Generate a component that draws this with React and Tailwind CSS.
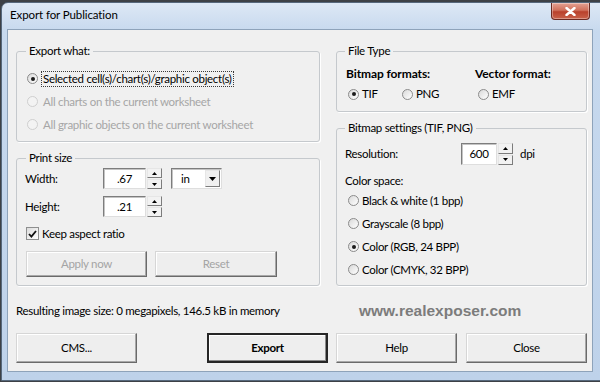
import React from 'react';

function Radio({ checked, disabled }) {
  return (
    <span
      className={`w-[11px] h-[11px] shrink-0 rounded-full border flex items-center justify-center ${
        disabled
          ? 'border-[#cfcfcf] bg-[#f3f3f3]'
          : 'border-[#8b8b8b] bg-[linear-gradient(135deg,#d9d9d9,#ffffff)]'
      }`}
    >
      {checked && <span className="w-[4px] h-[4px] rounded-full bg-[#1b1b1b]" />}
    </span>
  );
}

function Spinner({ h }) {
  return (
    <div className={`ml-[1px] w-[15px] flex flex-col gap-[1px] ${h}`}>
      <div className="flex-1 flex items-center justify-center bg-[#f2f2f2] border border-t-[#e6e6e6] border-l-[#e6e6e6] border-r-[#7c7c7c] border-b-[#7c7c7c]">
        <svg width="5" height="3" viewBox="0 0 5 3"><path d="M2.5 0L5 3H0z" fill="#000" /></svg>
      </div>
      <div className="flex-1 flex items-center justify-center bg-[#f2f2f2] border border-t-[#e6e6e6] border-l-[#e6e6e6] border-r-[#7c7c7c] border-b-[#7c7c7c]">
        <svg width="5" height="3" viewBox="0 0 5 3"><path d="M0 0h5L2.5 3z" fill="#000" /></svg>
      </div>
    </div>
  );
}

function TextBox({ value, w, h }) {
  return (
    <div className={`${w} ${h} bg-white flex items-center justify-center border border-t-[#7d7d7d] border-l-[#7d7d7d] border-r-[#dedede] border-b-[#dedede] shadow-[inset_1px_1px_0_#c4c4c4]`}>
      {value}
    </div>
  );
}

function Button({ children, w, disabled, isDefault }) {
  return (
    <button
      className={`${w} h-full flex items-center justify-center bg-[#eeeeee] ${
        isDefault
          ? 'border-2 border-[#262626] font-bold shadow-[inset_-1px_-1px_0_#8a8a8a,inset_1px_1px_0_#ffffff]'
          : 'border border-t-[#d6d6d6] border-l-[#d6d6d6] border-r-[#6a6a6a] border-b-[#6a6a6a] shadow-[inset_-1px_-1px_0_#a8a8a8,inset_1px_1px_0_#ffffff]'
      } ${disabled ? 'text-[#a4a4a4]' : 'text-black'}`}
    >
      {children}
    </button>
  );
}

export default function App() {
  return (
    <div className="w-[600px] h-[382px] overflow-hidden bg-[#3d4146] font-['Lato',sans-serif] text-[11.5px] tracking-[-0.3px] leading-[14px] text-black">
      <div className="ml-[1px] mt-[2px] w-[606px] h-[379px] flex flex-col rounded-t-[7px] border border-[#56687c] bg-[linear-gradient(180deg,#dde8f5_0px,#c7d9ee_28px,#bed2ea_100%)]">
        {/* title bar */}
        <div className="h-[26px] shrink-0 flex items-start justify-between">
          <span className="ml-[8px] mt-[5px] text-[11.5px] tracking-[-0.1px] text-black">Export for Publication</span>
          <div className="mr-[16px] w-[39px] h-[17px] flex items-center justify-center rounded-b-[4px] border border-t-0 border-[#6b2a22] bg-[linear-gradient(180deg,#e4a293_0%,#d0705b_45%,#b9412c_55%,#c9624a_100%)] shadow-[inset_0_0_0_1px_rgba(255,255,255,0.35)]">
            <svg width="11" height="9" viewBox="0 0 11 9">
              <path d="M1.5 1l8 7M9.5 1l-8 7" stroke="#fff" strokeWidth="2.4" strokeLinecap="round" />
            </svg>
          </div>
        </div>

        {/* client area */}
        <div className="ml-[5px] w-[586px] h-[343px] shrink-0 flex flex-col border border-[#8ea3ba] bg-[#f0f0f0] pl-[8px] pr-[5px] pt-[14px]">
          <div className="flex gap-[16px]">
            {/* left column */}
            <div className="w-[304px] flex flex-col">
              <fieldset className="h-[98px] border border-[#c5c9cd] rounded-[3px] shadow-[1px_1px_0_#ffffff]">
                <legend className="ml-[9px] px-[3px]">Export what:</legend>
                <div className="pt-[9px] pl-[10px] flex flex-col">
                  <div className="h-[23px] flex items-center">
                    <Radio checked />
                    <span className="ml-[3px] px-[1px] border border-dotted border-[#3a3a3a]">Selected cell(s)/chart(s)/graphic object(s)</span>
                  </div>
                  <div className="h-[23px] flex items-center">
                    <Radio disabled />
                    <span className="ml-[5px] text-[#a6a6a6]">All charts on the current worksheet</span>
                  </div>
                  <div className="h-[23px] flex items-center">
                    <Radio disabled />
                    <span className="ml-[5px] text-[#a6a6a6]">All graphic objects on the current worksheet</span>
                  </div>
                </div>
              </fieldset>

              <fieldset className="mt-[9px] h-[135px] border border-[#c5c9cd] rounded-[3px] shadow-[1px_1px_0_#ffffff]">
                <legend className="ml-[9px] px-[3px]">Print size</legend>
                <div className="pt-[3px] pl-[8px] flex flex-col">
                  <div className="h-[21px] flex items-center">
                    <span className="w-[78px]">Width:</span>
                    <TextBox value=".67" w="w-[43px]" h="h-[21px]" />
                    <Spinner h="h-[21px]" />
                    <div className="ml-[9px] w-[51px] h-[21px] flex items-center bg-white border border-t-[#7d7d7d] border-l-[#7d7d7d] border-r-[#dedede] border-b-[#dedede] shadow-[inset_1px_1px_0_#c4c4c4]">
                      <span className="flex-1 pl-[9px]">in</span>
                      <div className="w-[15px] h-[17px] mr-[1px] flex items-center justify-center bg-[#f0f0f0] border border-t-[#e6e6e6] border-l-[#e6e6e6] border-r-[#7c7c7c] border-b-[#7c7c7c]">
                        <svg width="7" height="4" viewBox="0 0 7 4"><path d="M0 0h7L3.5 4z" fill="#000" /></svg>
                      </div>
                    </div>
                  </div>
                  <div className="mt-[7px] h-[21px] flex items-center">
                    <span className="w-[78px]">Height:</span>
                    <TextBox value=".21" w="w-[43px]" h="h-[21px]" />
                    <Spinner h="h-[21px]" />
                  </div>
                  <div className="mt-[9px] h-[15px] flex items-center">
                    <span className="ml-[1px] w-[13px] h-[13px] flex items-center justify-center border border-[#8e8f8f] bg-[linear-gradient(135deg,#dcdcdc,#ffffff)]">
                      <svg width="9" height="8" viewBox="0 0 9 8">
                        <path d="M1 4l2.4 2.6L8 1" stroke="#111" strokeWidth="1.8" fill="none" />
                      </svg>
                    </span>
                    <span className="ml-[3px]">Keep aspect ratio</span>
                  </div>
                  <div className="mt-[10px] h-[26px] flex">
                    <div className="ml-[1px] h-full">
                      <Button w="w-[121px]" disabled>Apply now</Button>
                    </div>
                    <div className="ml-[8px] h-full">
                      <Button w="w-[122px]" disabled>Reset</Button>
                    </div>
                  </div>
                </div>
              </fieldset>
            </div>

            {/* right column */}
            <div className="w-[251px] flex flex-col">
              <fieldset className="h-[68px] border border-[#c5c9cd] rounded-[3px] shadow-[1px_1px_0_#ffffff]">
                <legend className="ml-[8px] px-[3px]">File Type</legend>
                <div className="pt-[9px] pl-[9px] flex">
                  <div className="w-[129px] flex flex-col">
                    <span className="font-bold text-[12px] tracking-[-0.1px]">Bitmap formats:</span>
                    <div className="mt-[6px] h-[14px] flex items-center">
                      <div className="w-[56px] flex items-center">
                        <span className="ml-[2px]"><Radio checked /></span>
                        <span className="ml-[3px]">TIF</span>
                      </div>
                      <Radio />
                      <span className="ml-[3px]">PNG</span>
                    </div>
                  </div>
                  <div className="flex flex-col">
                    <span className="font-bold text-[12px] tracking-[-0.1px]">Vector format:</span>
                    <div className="mt-[6px] h-[14px] flex items-center">
                      <span className="ml-[3px]"><Radio /></span>
                      <span className="ml-[3px]">EMF</span>
                    </div>
                  </div>
                </div>
              </fieldset>

              <fieldset className="mt-[9px] h-[165px] border border-[#c5c9cd] rounded-[3px] shadow-[1px_1px_0_#ffffff]">
                <legend className="ml-[8px] px-[3px]">Bitmap settings (TIF, PNG)</legend>
                <div className="pt-[8px] pl-[8px] flex flex-col">
                  <div className="h-[22px] flex items-center">
                    <span className="w-[116px]">Resolution:</span>
                    <TextBox value="600" w="w-[36px]" h="h-[22px]" />
                    <Spinner h="h-[22px]" />
                    <span className="ml-[7px]">dpi</span>
                  </div>
                  <span className="mt-[9px]">Color space:</span>
                  <div className="mt-[1px] flex flex-col">
                    {[
                      ['Black & white (1 bpp)', false],
                      ['Grayscale (8 bpp)', false],
                      ['Color (RGB, 24 BPP)', true],
                      ['Color (CMYK, 32 BPP)', false],
                    ].map(([label, on]) => (
                      <div key={label} className="h-[23px] flex items-center">
                        <span className="ml-[3px]"><Radio checked={on} /></span>
                        <span className="ml-[3px]">{label}</span>
                      </div>
                    ))}
                  </div>
                </div>
              </fieldset>
            </div>
          </div>

          {/* status */}
          <div className="mt-[18px] h-[14px] flex items-center">
            <span className="w-[343px] shrink-0">Resulting image size: 0 megapixels, 146.5 kB in memory</span>
            <span className="font-['Liberation_Sans',sans-serif] font-bold text-[15.5px] tracking-normal text-[#7c7c7c]">www.realexposer.com</span>
          </div>

          {/* buttons */}
          <div className="mt-[15px] h-[30px] flex">
            <Button w="w-[121px]">CMS...</Button>
            <div className="ml-[70px] h-full">
              <Button w="w-[121px]" isDefault>Export</Button>
            </div>
            <div className="ml-[8px] h-full">
              <Button w="w-[121px]">Help</Button>
            </div>
            <div className="ml-[9px] h-full">
              <Button w="w-[121px]">Close</Button>
            </div>
          </div>
        </div>
      </div>
    </div>
  );
}
